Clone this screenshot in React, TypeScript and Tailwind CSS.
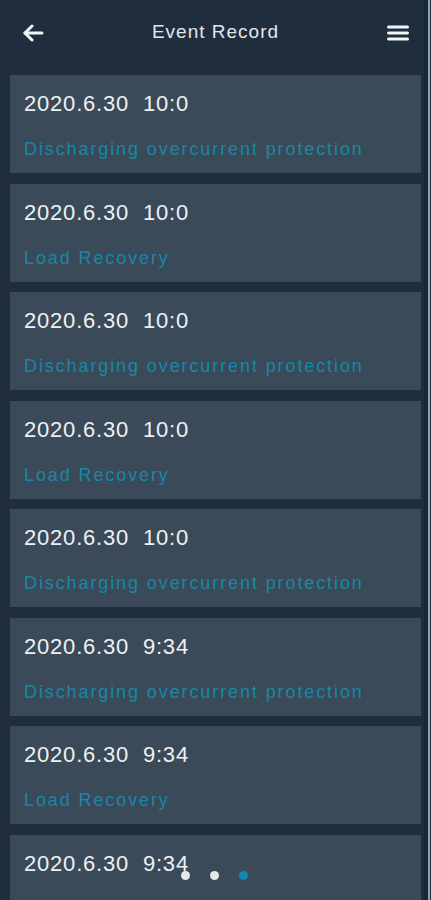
const EVENTS = [
  { time: '2020.6.30  10:0', text: 'Discharging overcurrent protection' },
  { time: '2020.6.30  10:0', text: 'Load Recovery' },
  { time: '2020.6.30  10:0', text: 'Discharging overcurrent protection' },
  { time: '2020.6.30  10:0', text: 'Load Recovery' },
  { time: '2020.6.30  10:0', text: 'Discharging overcurrent protection' },
  { time: '2020.6.30  9:34', text: 'Discharging overcurrent protection' },
  { time: '2020.6.30  9:34', text: 'Load Recovery' },
  { time: '2020.6.30  9:34', text: 'Load Recovery' },
]

export default function App() {
  return (
    <div
      className="relative h-[900px] w-[431px] overflow-hidden bg-[#1f2d3c] flex"
      style={{ fontFamily: '"Liberation Sans", Arial, sans-serif' }}
    >
      <div className="flex-1 flex flex-col">
        {/* Header */}
        <header className="h-[65px] shrink-0 flex items-center justify-between pl-[22px] pr-[15px]">
          <svg width="22" height="18" viewBox="0 0 22 18" fill="none" stroke="#f2f4f6" strokeWidth="3" strokeLinecap="round" strokeLinejoin="round">
            <path d="M20 9H3" />
            <path d="M10 2L3 9l7 7" />
          </svg>
          <h1 className="text-[19px] text-[#e3e7ea] tracking-[1px]">Event Record</h1>
          <svg width="22" height="16" viewBox="0 0 22 16">
            <rect x="0" y="0.5" width="22" height="3" rx="1.5" fill="#f2f4f6" />
            <rect x="0" y="6.5" width="22" height="3" rx="1.5" fill="#f2f4f6" />
            <rect x="0" y="12.5" width="22" height="3" rx="1.5" fill="#f2f4f6" />
          </svg>
        </header>

        {/* Records */}
        <main className="flex flex-col gap-[10.5px] pl-[10px] pr-[3px] pt-[10px]">
          {EVENTS.map((e, i) => (
            <div key={i} className="h-[98px] shrink-0 bg-[#3b4a59] pl-[14px] pt-[15px]">
              <div className="text-[22px] leading-[28px] text-[#eef1f3] tracking-[0.8px] whitespace-pre">{e.time}</div>
              <div className="mt-[20px] text-[18px] leading-[22px] text-[#1787a6] tracking-[1.9px]">{e.text}</div>
            </div>
          ))}
        </main>
      </div>

      {/* right edge strip */}
      <div className="w-[7px] flex">
        <div className="w-[4px] bg-[#182635]" />
        <div className="w-[2px] bg-[#8da0b0]" />
        <div className="w-[1px] bg-[#1f2d3c]" />
      </div>

      {/* pager dots */}
      <div className="absolute left-0 right-0 bottom-[20px] flex justify-center gap-[20px] pr-[2px]">
        <span className="w-[9px] h-[9px] rounded-full bg-[#e6e8ea]" />
        <span className="w-[9px] h-[9px] rounded-full bg-[#e6e8ea]" />
        <span className="w-[9px] h-[9px] rounded-full bg-[#1588b0]" />
      </div>
    </div>
  )
}
